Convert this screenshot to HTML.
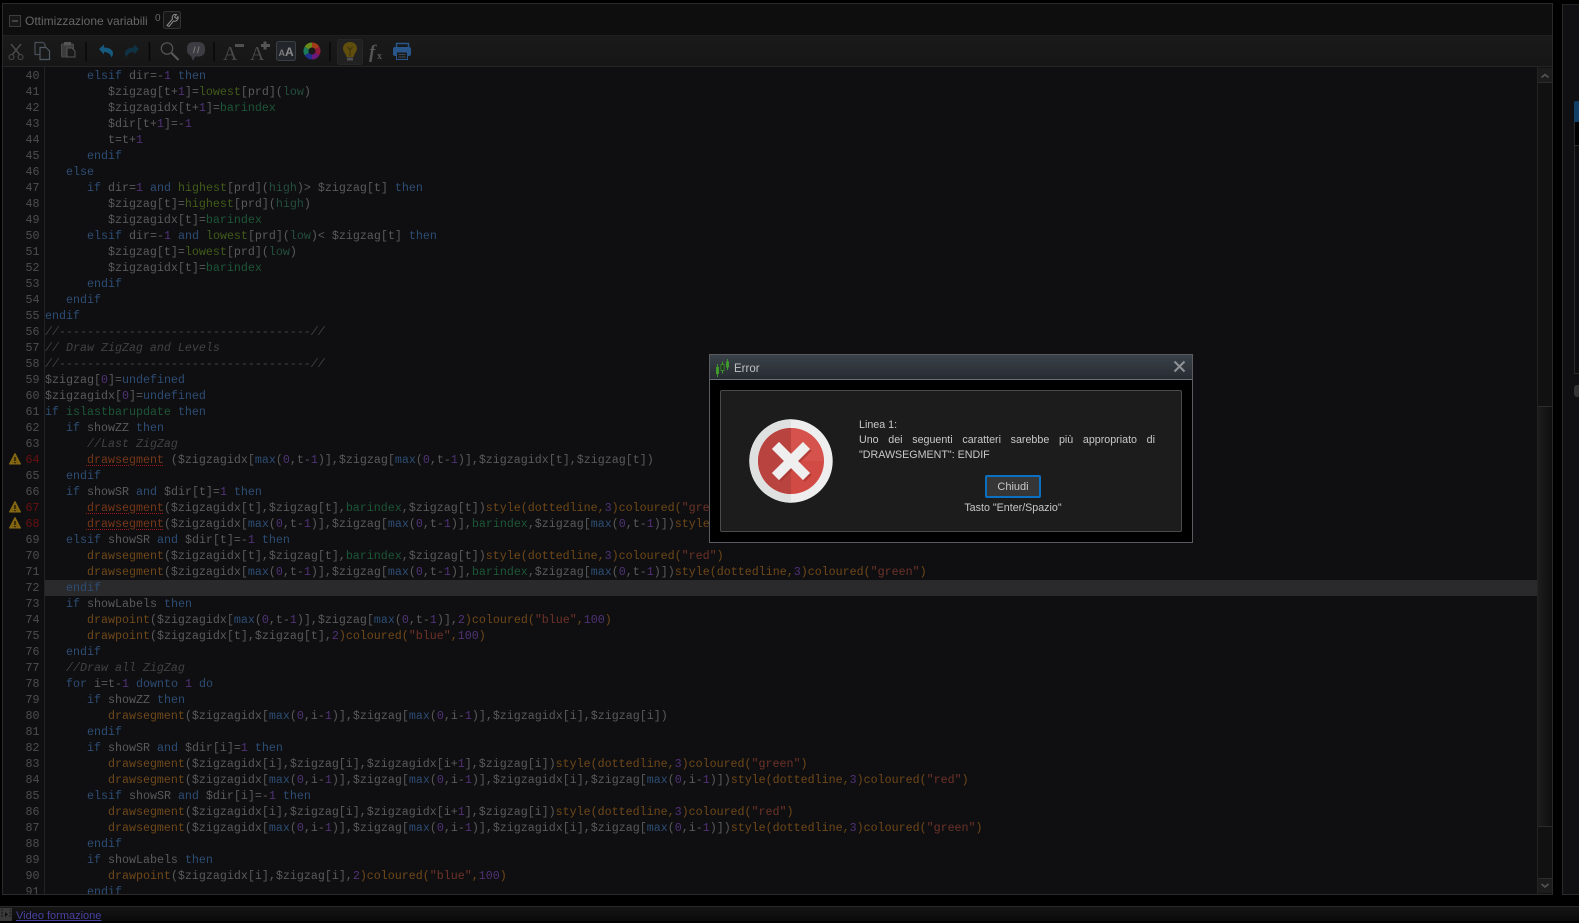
<!DOCTYPE html>
<html><head><meta charset="utf-8"><title>Editor</title>
<style>
html,body{margin:0;padding:0;background:#000;width:1579px;height:921px;overflow:hidden}
*{box-sizing:border-box}
.abs,#panel,#code{position:absolute}
#panel{left:2px;top:3px;width:1551px;height:892px;border:1px solid #2a2a2a;background:#0f0f11}
#title{position:absolute;left:3px;top:4px;width:1549px;height:31px;background:#0e0e0e}
#tb{position:absolute;left:3px;top:35px;width:1549px;height:32px;background:linear-gradient(#1a1a1a,#161616);border-top:1px solid #1f1f1f;border-bottom:1px solid #242424}
#gut{position:absolute;left:44px;top:67px;width:1px;height:827px;background:#222}
#code{left:3px;top:68px;width:1534px;height:826px;overflow:hidden;font:11.67px/16px "Liberation Mono",monospace;color:#5a5a5a}
.l{height:16px;white-space:pre;position:relative;padding-left:42px}
.n{position:absolute;left:0;width:36.5px;text-align:right;color:#4e4e4e}
.e{color:#6a1010}
.hl{background:#2a2a2c;margin-left:42px;padding-left:0}
.hl .n{left:-42px}
b,i,u,s,em,var,cite{font:inherit;text-decoration:none}
b{color:#2d4d74}i{color:#503276}u{color:#6f4819}s{color:#1d5637}var{color:#415b1a}cite{color:#244e3d}em{color:#6d3228}
.c{font-style:italic;color:#424242}
.w{color:#763718;text-decoration:underline dotted #a01818 1px;text-underline-offset:2px}
#sb{position:absolute;left:1537px;top:67px;width:15px;height:827px;background:#111;border-left:1px solid #232323}
#sb div{position:absolute;left:0;width:14px}
#r{position:absolute;left:1562px;top:4px;width:17px;height:891px;background:#101012;border-left:1px solid #2a2a2a;border-top:1px solid #222;border-bottom:1px solid #2a2a2a}
#bot{position:absolute;left:0;top:906px;width:1579px;height:15px;background:linear-gradient(#151515,#0a0a0a);border-top:1px solid #2a2a2a}
#link{position:absolute;left:16px;top:910px;font:11px/13px "Liberation Sans",sans-serif;color:#4642a0;text-decoration:underline}
#dlg{position:absolute;left:709px;top:354px;width:484px;height:189px;background:#000;border:1px solid #5a5d60}
#dh{position:absolute;left:0;top:0;width:482px;height:25px;background:linear-gradient(#3a4148,#272c32);border-bottom:1px solid #6a6e72;color:#c0c0c0;font:11.5px/28px "Liberation Sans",sans-serif;padding-left:24px}
#in{position:absolute;left:10px;top:35px;width:462px;height:142px;background:#1c1c1c;border:1px solid #4a4a4a;border-radius:2px}
.t{position:absolute;font:10.7px/15px "Liberation Sans",sans-serif;color:#c8c8c8}
#btn{position:absolute;left:264px;top:84px;width:56px;height:23px;background:#363636;border:2px solid #0b6fc2;border-radius:2px;color:#c8c8c8;font:11px/20px "Liberation Sans",sans-serif;text-align:center}
svg{position:absolute;overflow:visible}
</style></head><body>
<div id="panel"></div>
<div id="title"></div>
<div id="tb"></div>
<div class="abs" style="left:25px;top:14px;font:12px/15px 'Liberation Sans',sans-serif;color:#666;white-space:nowrap">Ottimizzazione variabili</div>
<div class="abs" style="left:155px;top:13px;font:10px/12px 'Liberation Sans',sans-serif;color:#666">0</div>

<svg style="left:0;top:0" width="440" height="67" fill="none">
 <!-- collapse box -->
 <rect x="9.500" y="15.500" width="11" height="11" fill="#181818" stroke="#3c3c3c"/><path d="M12 21h6" stroke="#5a5a5a" stroke-width="1.300"/>
 <!-- wrench -->
 <rect x="163.500" y="11.500" width="17" height="17" rx="2" fill="#171717" stroke="#333"/>
 <path d="M167 25.500l5.500-6.500c-1-3 1-5 4-4.500l-2 2.500 2 1.500 1.500-2c1 3-2 5.500-4.500 4.500l-4.500 5.500z" stroke="#8a8a8a" stroke-width="1"/>
 <!-- scissors -->
 <path d="M11 44l9 11M21 44l-9 11" stroke="#4a4a4a" stroke-width="1.400"/>
 <circle cx="11.500" cy="57" r="2.500" stroke="#4a4a4a" stroke-width="1.100"/><circle cx="20.500" cy="57" r="2.500" stroke="#4a4a4a" stroke-width="1.100"/>
 <!-- copy -->
 <path d="M35 42.500h8l2 2v10h-10z" fill="#191919" stroke="#47505a" stroke-width="1.200"/>
 <path d="M40 47.500h6l3.500 3.500v8.500h-9.500z" fill="#191919" stroke="#4e5860" stroke-width="1.200"/>
 <!-- paste -->
 <rect x="61.500" y="44" width="12" height="13" rx="1" fill="#3c3c3c" stroke="#4a4a4a"/>
 <rect x="64" y="42" width="7" height="3.500" fill="#555"/>
 <path d="M67 48h5l3 3v6h-8z" fill="#1a1a1a" stroke="#555"/>
 <!-- separators -->
 <path d="M86 42v19M149.500 42v19M214 42v19M330 42v19" stroke="#070707" stroke-width="1.400"/>
 <!-- undo -->
 <path d="M99 49l5-4.500v3c5 0 9 2 9 6 0 2-1 3-2 4 .5-3-3-5.500-7-5.500v2.500z" fill="#15597f"/>
 <!-- redo -->
 <path d="M139 49l-5-4.500v3c-5 0-9 2-9 6 0 2 1 3 2 4-.5-3 3-5.500 7-5.500v2.500z" fill="#103245"/>
 <!-- magnifier -->
 <circle cx="167" cy="48.500" r="5.700" stroke="#555" stroke-width="1.200"/><path d="M171.500 53l7 7" stroke="#5a5a5a" stroke-width="2"/>
 <!-- comment bubble -->
 <path d="M193 42h6c3.500 0 6 2.500 6 6v2.500c0 3.500-2.500 6-6 6h-4l-2 4.500-2-5c-2-1-4-3-4-5.500V48c0-3.500 2.500-6 6-6z" fill="#3c3c42"/>
 <path d="M193.500 53l1.600-6.500M197.500 53l1.600-6.500" stroke="#7a7a7a" stroke-width="1"/>
 <!-- A- A+ -->
 <text x="223" y="60" font-family="Liberation Serif,serif" font-size="20" fill="#4a4a4a">A</text>
 <rect x="235" y="44" width="9" height="3" fill="#505050"/>
 <text x="250" y="60" font-family="Liberation Serif,serif" font-size="20" fill="#4a4a4a">A</text>
 <path d="M265 41.500v8M261 45.500h9" stroke="#555" stroke-width="3"/>
 <!-- AA -->
 <rect x="276.500" y="41.500" width="19" height="19" rx="2" fill="#22262b" stroke="#3a3f45"/>
 <text x="278.500" y="56" font-family="Liberation Sans,sans-serif" font-weight="bold" font-size="9" fill="#7a7a7a">A</text>
 <text x="285" y="56" font-family="Liberation Sans,sans-serif" font-weight="bold" font-size="12" fill="#8a8a8a">A</text>
 <!-- wheel -->
 <g stroke-width="5" transform="translate(312 51)">
  <path d="M0-6A6 6 0 0 1 5.200-3" stroke="#a33a1a"/><path d="M5.200-3A6 6 0 0 1 5.200 3" stroke="#8f1a3a"/>
  <path d="M5.200 3A6 6 0 0 1 0 6" stroke="#6a1a7a"/><path d="M0 6A6 6 0 0 1-5.200 3" stroke="#1f2f8a"/>
  <path d="M-5.200 3A6 6 0 0 1-5.200-3" stroke="#1a7a5a"/><path d="M-5.200-3A6 6 0 0 1 0-6" stroke="#6a8a1a"/>
 </g>
 <!-- bulb -->
 <rect x="337.500" y="39.500" width="25" height="25" rx="2" fill="#212121" stroke="#262626"/>
 <path d="M350 42c-4.500 0-7 3-7 6.500 0 3 2.500 4.500 3.500 8.500h7c1-4 3.500-5.500 3.500-8.500 0-3.500-2.500-6.500-7-6.500z" fill="#5f4e0e"/>
 <path d="M347.500 47l2.500 3 2.500-3M350 50v6" stroke="#3c3008" stroke-width="1"/>
 <rect x="347" y="57.500" width="6" height="3" fill="#4f4f4f"/>
 <!-- fx -->
 <text x="369" y="58" font-family="Liberation Serif,serif" font-style="italic" font-weight="bold" font-size="19" fill="#555">f</text>
 <text x="377" y="59" font-family="Liberation Serif,serif" font-weight="bold" font-size="10" fill="#555">x</text>
 <!-- printer -->
 <path d="M396.500 48v-4.500h12V48" stroke="#28558a" stroke-width="1.500"/>
 <rect x="393" y="47" width="18" height="9" rx="2" fill="#28558a"/>
 <rect x="396.500" y="52" width="11" height="7.500" fill="#1a1a1a" stroke="#28558a"/>
 <path d="M398.500 54.500h7M398.500 57h7" stroke="#3a4a5a"/>
</svg>

<div id="code">
<div class="l"><span class="n">40</span>      <b>elsif</b> dir=-<i>1</i> <b>then</b></div>
<div class="l"><span class="n">41</span>         $zigzag[t+<i>1</i>]=<var>lowest</var>[prd](<cite>low</cite>)</div>
<div class="l"><span class="n">42</span>         $zigzagidx[t+<i>1</i>]=<s>barindex</s></div>
<div class="l"><span class="n">43</span>         $dir[t+<i>1</i>]=-<i>1</i></div>
<div class="l"><span class="n">44</span>         t=t+<i>1</i></div>
<div class="l"><span class="n">45</span>      <b>endif</b></div>
<div class="l"><span class="n">46</span>   <b>else</b></div>
<div class="l"><span class="n">47</span>      <b>if</b> dir=<i>1</i> <b>and</b> <var>highest</var>[prd](<cite>high</cite>)&gt; $zigzag[t] <b>then</b></div>
<div class="l"><span class="n">48</span>         $zigzag[t]=<var>highest</var>[prd](<cite>high</cite>)</div>
<div class="l"><span class="n">49</span>         $zigzagidx[t]=<s>barindex</s></div>
<div class="l"><span class="n">50</span>      <b>elsif</b> dir=-<i>1</i> <b>and</b> <var>lowest</var>[prd](<cite>low</cite>)&lt; $zigzag[t] <b>then</b></div>
<div class="l"><span class="n">51</span>         $zigzag[t]=<var>lowest</var>[prd](<cite>low</cite>)</div>
<div class="l"><span class="n">52</span>         $zigzagidx[t]=<s>barindex</s></div>
<div class="l"><span class="n">53</span>      <b>endif</b></div>
<div class="l"><span class="n">54</span>   <b>endif</b></div>
<div class="l"><span class="n">55</span><b>endif</b></div>
<div class="l"><span class="n">56</span><span class="c">//------------------------------------//</span></div>
<div class="l"><span class="n">57</span><span class="c">// Draw ZigZag and Levels</span></div>
<div class="l"><span class="n">58</span><span class="c">//------------------------------------//</span></div>
<div class="l"><span class="n">59</span>$zigzag[<i>0</i>]=<b>undefined</b></div>
<div class="l"><span class="n">60</span>$zigzagidx[<i>0</i>]=<b>undefined</b></div>
<div class="l"><span class="n">61</span><b>if</b> <s>islastbarupdate</s> <b>then</b></div>
<div class="l"><span class="n">62</span>   <b>if</b> showZZ <b>then</b></div>
<div class="l"><span class="n">63</span>      <span class="c">//Last ZigZag</span></div>
<div class="l"><span class="n e">64</span>      <span class="w">drawsegment</span> ($zigzagidx[<b>max</b>(<i>0</i>,t-<i>1</i>)],$zigzag[<b>max</b>(<i>0</i>,t-<i>1</i>)],$zigzagidx[t],$zigzag[t])</div>
<div class="l"><span class="n">65</span>   <b>endif</b></div>
<div class="l"><span class="n">66</span>   <b>if</b> showSR <b>and</b> $dir[t]=<i>1</i> <b>then</b></div>
<div class="l"><span class="n e">67</span>      <span class="w">drawsegment</span>($zigzagidx[t],$zigzag[t],<s>barindex</s>,$zigzag[t])<u>style(dottedline,</u><i>3</i><u>)coloured(</u><em>"green"</em><u>)</u></div>
<div class="l"><span class="n e">68</span>      <span class="w">drawsegment</span>($zigzagidx[<b>max</b>(<i>0</i>,t-<i>1</i>)],$zigzag[<b>max</b>(<i>0</i>,t-<i>1</i>)],<s>barindex</s>,$zigzag[<b>max</b>(<i>0</i>,t-<i>1</i>)])<u>style(dottedline,</u><i>3</i><u>)coloured(</u><em>"red"</em><u>)</u></div>
<div class="l"><span class="n">69</span>   <b>elsif</b> showSR <b>and</b> $dir[t]=-<i>1</i> <b>then</b></div>
<div class="l"><span class="n">70</span>      <u>drawsegment</u>($zigzagidx[t],$zigzag[t],<s>barindex</s>,$zigzag[t])<u>style(dottedline,</u><i>3</i><u>)coloured(</u><em>"red"</em><u>)</u></div>
<div class="l"><span class="n">71</span>      <u>drawsegment</u>($zigzagidx[<b>max</b>(<i>0</i>,t-<i>1</i>)],$zigzag[<b>max</b>(<i>0</i>,t-<i>1</i>)],<s>barindex</s>,$zigzag[<b>max</b>(<i>0</i>,t-<i>1</i>)])<u>style(dottedline,</u><i>3</i><u>)coloured(</u><em>"green"</em><u>)</u></div>
<div class="l hl"><span class="n">72</span>   <b>endif</b></div>
<div class="l"><span class="n">73</span>   <b>if</b> showLabels <b>then</b></div>
<div class="l"><span class="n">74</span>      <u>drawpoint</u>($zigzagidx[<b>max</b>(<i>0</i>,t-<i>1</i>)],$zigzag[<b>max</b>(<i>0</i>,t-<i>1</i>)],<i>2</i><u>)coloured(</u><em>"blue"</em><u>,</u><i>100</i><u>)</u></div>
<div class="l"><span class="n">75</span>      <u>drawpoint</u>($zigzagidx[t],$zigzag[t],<i>2</i><u>)coloured(</u><em>"blue"</em><u>,</u><i>100</i><u>)</u></div>
<div class="l"><span class="n">76</span>   <b>endif</b></div>
<div class="l"><span class="n">77</span>   <span class="c">//Draw all ZigZag</span></div>
<div class="l"><span class="n">78</span>   <b>for</b> i=t-<i>1</i> <b>downto</b> <i>1</i> <b>do</b></div>
<div class="l"><span class="n">79</span>      <b>if</b> showZZ <b>then</b></div>
<div class="l"><span class="n">80</span>         <u>drawsegment</u>($zigzagidx[<b>max</b>(<i>0</i>,i-<i>1</i>)],$zigzag[<b>max</b>(<i>0</i>,i-<i>1</i>)],$zigzagidx[i],$zigzag[i])</div>
<div class="l"><span class="n">81</span>      <b>endif</b></div>
<div class="l"><span class="n">82</span>      <b>if</b> showSR <b>and</b> $dir[i]=<i>1</i> <b>then</b></div>
<div class="l"><span class="n">83</span>         <u>drawsegment</u>($zigzagidx[i],$zigzag[i],$zigzagidx[i+<i>1</i>],$zigzag[i])<u>style(dottedline,</u><i>3</i><u>)coloured(</u><em>"green"</em><u>)</u></div>
<div class="l"><span class="n">84</span>         <u>drawsegment</u>($zigzagidx[<b>max</b>(<i>0</i>,i-<i>1</i>)],$zigzag[<b>max</b>(<i>0</i>,i-<i>1</i>)],$zigzagidx[i],$zigzag[<b>max</b>(<i>0</i>,i-<i>1</i>)])<u>style(dottedline,</u><i>3</i><u>)coloured(</u><em>"red"</em><u>)</u></div>
<div class="l"><span class="n">85</span>      <b>elsif</b> showSR <b>and</b> $dir[i]=-<i>1</i> <b>then</b></div>
<div class="l"><span class="n">86</span>         <u>drawsegment</u>($zigzagidx[i],$zigzag[i],$zigzagidx[i+<i>1</i>],$zigzag[i])<u>style(dottedline,</u><i>3</i><u>)coloured(</u><em>"red"</em><u>)</u></div>
<div class="l"><span class="n">87</span>         <u>drawsegment</u>($zigzagidx[<b>max</b>(<i>0</i>,i-<i>1</i>)],$zigzag[<b>max</b>(<i>0</i>,i-<i>1</i>)],$zigzagidx[i],$zigzag[<b>max</b>(<i>0</i>,i-<i>1</i>)])<u>style(dottedline,</u><i>3</i><u>)coloured(</u><em>"green"</em><u>)</u></div>
<div class="l"><span class="n">88</span>      <b>endif</b></div>
<div class="l"><span class="n">89</span>      <b>if</b> showLabels <b>then</b></div>
<div class="l"><span class="n">90</span>         <u>drawpoint</u>($zigzagidx[i],$zigzag[i],<i>2</i><u>)coloured(</u><em>"blue"</em><u>,</u><i>100</i><u>)</u></div>
<div class="l"><span class="n">91</span>      <b>endif</b></div>
</div>
<div id="gut"></div>

<!-- warning icons -->
<svg style="left:0;top:0" width="30" height="540">
 <g><path d="M15 453.500l5.500 10.500h-11z" fill="#7f6210" stroke="#8a6c14" stroke-linejoin="round"/><path d="M15 457v4M15 462v1.300" stroke="#1a1408" stroke-width="1.300"/></g>
 <g transform="translate(0 48)"><path d="M15 453.500l5.500 10.500h-11z" fill="#7f6210" stroke="#8a6c14" stroke-linejoin="round"/><path d="M15 457v4M15 462v1.300" stroke="#1a1408" stroke-width="1.300"/></g>
 <g transform="translate(0 64)"><path d="M15 453.500l5.500 10.500h-11z" fill="#7f6210" stroke="#8a6c14" stroke-linejoin="round"/><path d="M15 457v4M15 462v1.300" stroke="#1a1408" stroke-width="1.300"/></g>
</svg>

<div id="sb">
 <div style="top:1px;height:15px;background:#1c1c1c;border-bottom:1px solid #2c2c2c"></div>
 <div style="top:339px;height:421px;background:linear-gradient(90deg,#1d1d1d,#0e0e0e);border-top:1px solid #2c2c2c;border-bottom:1px solid #2c2c2c"></div>
 <div style="top:811px;height:15px;background:#1c1c1c;border-top:1px solid #2c2c2c"></div>
 <svg style="left:0;top:0" width="14" height="827" fill="none"><path d="M3.500 10.500l3.500-3 3.500 3M3.500 817l3.500 3 3.500-3" stroke="#555" stroke-width="1.600"/></svg>
</div>

<div id="r"></div>
<div class="abs" style="left:1574px;top:101px;width:5px;height:21px;background:#123f66;border-radius:2px 0 0 0"></div>
<div class="abs" style="left:1574px;top:122px;width:5px;height:252px;background:#0d0d0f;border-left:1px solid #2a2a2a;border-bottom:1px solid #2a2a2a"></div>
<div class="abs" style="left:1575px;top:122px;width:4px;height:24px;background:#000;border-bottom:1px solid #2a2a2a"></div>
<div class="abs" style="left:1574px;top:385px;width:5px;height:12px;background:#333;border-radius:3px 0 0 3px"></div>

<div id="bot"></div>
<svg style="left:0;top:907px" width="14" height="14"><rect x="0" y="1" width="12" height="13" fill="#3a3a3a"/><path d="M1 3h2M1 6h2M1 9h2M9.500 3h2M9.500 6h2M9.500 9h2" stroke="#111" stroke-width="1"/><path d="M5 5l3 2.500-3 2.500z" fill="#111"/></svg>
<div id="link">Video formazione</div>

<div id="dlg">
 <div id="dh">Error</div>
 <svg style="left:5px;top:4px" width="18" height="18"><path d="M2.500 5v13M7.500 2.500v12M12.500 0v11" stroke="#3e9a2a" stroke-width="1"/><rect x="1" y="8" width="3" height="7" fill="#3e9a2a"/><rect x="6" y="5.500" width="3" height="6" fill="#1e2a22" stroke="#3e9a2a" stroke-width=".8"/><rect x="11" y="2.500" width="3" height="6" fill="#3e9a2a"/></svg>
 <svg style="left:462px;top:4px" width="16" height="16"><path d="M2.500 2.500l10 10M12.500 2.500l-10 10" stroke="#8e9296" stroke-width="2"/></svg>
 <div id="in">
  <svg style="left:28px;top:28px" width="84" height="84">
   <circle cx="42" cy="42" r="41.700" fill="#eeeeee"/>
   <path d="M42 .3a41.700 41.700 0 0 0 0 83.400z" fill="#dfe1e1"/>
   <circle cx="42" cy="42" r="33" fill="#d24a44"/>
   <path d="M42 9a33 33 0 0 0 0 66z" fill="#b9433f"/>
   <path d="M42 9a33 33 0 0 1 33 33h-33z" fill="#d95a54" opacity=".6"/>
   <g transform="rotate(45 42 42)">
    <path d="M37 20h10v17h17v10H47v17H37V47H20V37h17z" fill="#a83632" opacity=".7" transform="translate(2.500 0)"/>
    <path d="M37 20h10v17h17v10H47v17H37V47H20V37h17z" fill="#efefef"/>
   </g>
  </svg>
  <div class="t" style="left:138px;top:27px">Linea 1:</div>
  <div class="t" style="left:138px;top:42px;width:296px;text-align:justify;text-align-last:justify">Uno dei seguenti caratteri sarebbe più appropriato di</div>
  <div class="t" style="left:138px;top:57px">"DRAWSEGMENT": ENDIF</div>
  <div id="btn">Chiudi</div>
  <div class="t" style="left:192px;top:110px;width:200px;text-align:center">Tasto "Enter/Spazio"</div>
 </div>
</div>
</body></html>
